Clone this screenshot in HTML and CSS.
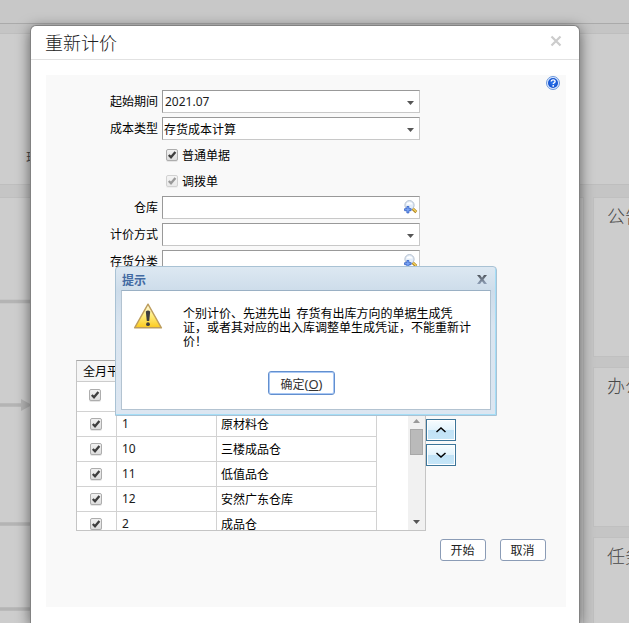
FILE: index.html
```html
<!DOCTYPE html>
<html lang="zh-CN">
<head>
<meta charset="utf-8">
<title>重新计价</title>
<link rel="stylesheet" href="styles.css">
</head>
<body>
<svg class="defs" width="0" height="0" aria-hidden="true">
  <defs>
    <linearGradient id="boxfill" x2="0" y2="1"><stop stop-color="#f2f2f2"/><stop offset="1" stop-color="#dcdcdc"/></linearGradient>
    <linearGradient id="warnfill" x2="0" y2="1"><stop stop-color="#fffbe8"/><stop offset=".5" stop-color="#ffec7a"/><stop offset="1" stop-color="#fbc91c"/></linearGradient>
    <radialGradient id="helpfill"><stop stop-color="#2f7df5"/><stop offset="1" stop-color="#1450cc"/></radialGradient>
    <linearGradient id="closefill" x2="0" y2="1"><stop stop-color="#525860"/><stop offset="1" stop-color="#8fa0b8"/></linearGradient>
    <symbol id="check" viewBox="0 0 12 13">
      <rect y="1" width="12" height="12" rx="2" fill="#e6e6e6"/>
      <rect x=".5" y=".5" width="11" height="11" rx="1.5" fill="url(#boxfill)" stroke="#adadad"/>
      <path d="M2.800 6 5 8.300 9.400 3" fill="none" stroke="#3e3e3e" stroke-width="2.300"/>
    </symbol>
    <symbol id="lookup" viewBox="0 0 14 14">
      <path d="m8.300 8.400 4 3.700" stroke="#a87c1c" stroke-width="2.800"/>
      <path d="m8.500 8.200 3.700 3.500" stroke="#f3d45e" stroke-width="1.500"/>
      <circle cx="5.500" cy="5.200" r="4.600" fill="#e3edf9" stroke="#b4bfce"/>
      <path d="M2.200 4.500a3.500 3.500 0 0 1 6.500 0Z" fill="#fff"/>
      <path d="M2.900 6.500h2v2.200h2.200v2H4.900v2.200h-2v-2.200H.6v-2h2.300Z" fill="#7ba5f5" stroke="#3a66c8" stroke-width=".9"/>
    </symbol>
  </defs>
</svg>

<div class="page">
  <div class="topbar"></div>
  <div class="banner"><span>现</span></div>
  <div class="workspace">
    <div class="flow">
      <svg width="584" height="425" viewBox="0 0 584 425">
        <g stroke="#b4b4b4" stroke-width="3.500"><path d="M0 103.500h60M0 207h24M0 326h60M0 411h60"/></g>
        <path d="M21 201 32 207 21 213Z" fill="#b4b4b4"/>
      </svg>
    </div>
    <div class="side">
      <section>公告</section>
      <section>办公</section>
      <section>任务</section>
    </div>
  </div>
</div>

<div class="modal">
  <header class="modal-head">
    <h1>重新计价</h1>
    <svg width="12" height="12" viewBox="0 0 12 12"><path d="m1.500 1.500 9 9m0-9-9 9" stroke="#ccc" stroke-width="2.200"/></svg>
  </header>
  <div class="modal-body">
    <svg class="help" width="14" height="14" viewBox="0 0 14 14">
      <circle cx="7" cy="7" r="6.500" fill="#dcebff" stroke="#6d98dc"/>
      <circle cx="7" cy="7" r="5" fill="url(#helpfill)"/>
      <path d="M5.200 5.600c0-2.300 3.900-2.300 3.900-.2 0 1.300-1.900 1.400-1.900 2.700M7.200 9.100v1.600" stroke="#fff" stroke-width="1.400" fill="none"/>
    </svg>
    <div class="form">
      <div class="row"><label>起始期间</label><div class="field"><span class="num">2021.07</span><i class="drop"></i></div></div>
      <div class="row"><label>成本类型</label><div class="field"><span>存货成本计算</span><i class="drop"></i></div></div>
      <div class="ticks">
        <div class="tick"><svg width="12" height="13"><use href="#check"/></svg><span>普通单据</span></div>
        <div class="tick off"><svg width="12" height="13"><use href="#check"/></svg><span>调拨单</span></div>
      </div>
      <div class="row"><label>仓库</label><div class="field"><svg width="14" height="14"><use href="#lookup"/></svg></div></div>
      <div class="row"><label>计价方式</label><div class="field"><i class="drop"></i></div></div>
      <div class="row"><label>存货分类</label><div class="field"><svg width="14" height="14"><use href="#lookup"/></svg></div></div>
      <div class="row"><label>存货</label><div class="field"><svg width="14" height="14"><use href="#lookup"/></svg></div></div>
    </div>
    <div class="lists">
      <div class="grid">
        <div class="grid-head">全月平均</div>
        <div class="grid-all"><svg width="12" height="13"><use href="#check"/></svg></div>
        <div class="grid-scroll">
          <div class="grid-rows">
            <div class="line"><b><svg width="12" height="13"><use href="#check"/></svg></b><span class="num">1</span><span>原材料仓</span></div>
            <div class="line"><b><svg width="12" height="13"><use href="#check"/></svg></b><span class="num">10</span><span>三楼成品仓</span></div>
            <div class="line"><b><svg width="12" height="13"><use href="#check"/></svg></b><span class="num">11</span><span>低值品仓</span></div>
            <div class="line"><b><svg width="12" height="13"><use href="#check"/></svg></b><span class="num">12</span><span>安然广东仓库</span></div>
            <div class="line"><b><svg width="12" height="13"><use href="#check"/></svg></b><span class="num">2</span><span>成品仓</span></div>
          </div>
          <div class="scrollbar"><i class="up"></i><i class="thumb"></i><i class="drop"></i></div>
        </div>
      </div>
      <div class="movers">
        <button><svg width="10" height="6" viewBox="0 0 10 6"><path d="m.5 5 4.500-4 4.500 4"/></svg></button>
        <button><svg width="10" height="6" viewBox="0 0 10 6"><path d="m.5 1 4.500 4 4.500-4"/></svg></button>
      </div>
    </div>
    <div class="actions"><button>开始</button><button>取消</button></div>
  </div>
</div>

<div class="alert">
  <div class="alert-head"><strong>提示</strong>
    <svg width="10" height="9" viewBox="0 0 10 9"><path d="M0 0h3L5 2.800 7 0h3L6.500 4.500 10 9H7L5 6.200 3 9H0l3.500-4.500Z" fill="url(#closefill)"/></svg>
  </div>
  <div class="alert-body">
    <div class="message">
      <svg width="30" height="26" viewBox="0 0 30 26">
        <path d="M15 1.200 28.400 24.800H1.600Z" fill="url(#warnfill)" stroke="#bd9d5c" stroke-width="1.400" stroke-linejoin="round"/>
        <path d="M12.800 8.500q2.200-2 4.400 0L16.200 18h-2.400Z" fill="#3d3d3d"/><circle cx="15" cy="21.200" r="1.900" fill="#3d3d3d"/>
      </svg>
      <p>个别计价、先进先出&nbsp; 存货有出库方向的单据生成凭<br>证，或者其对应的出入库调整单生成凭证，不能重新计<br>价！</p>
    </div>
    <button>确定<span>(<u>O</u>)</span></button>
  </div>
</div>
</body>
</html>
```
FILE: styles.css
```css
* { box-sizing: border-box; }
html, body { height: 100%; margin: 0; overflow: hidden; }
body {
  position: relative;
  background: #c5c5c5;
  color: #000;
  font: 12px/14px "Noto Sans CJK SC", sans-serif;
}
svg { display: block; flex: none; }
.defs { position: absolute; }
.num { font-family: "Noto Sans", sans-serif; color: #1c1c1c; }
button { padding: 0; font: inherit; }

.page { height: 623px; overflow: hidden; }
.topbar { height: 24px; background: #c8c8c8; border-bottom: 1px solid #aaa; }
.banner {
  height: 152px; margin-top: 9px; padding: 116px 0 0 26px;
  background: #cdcdcd; border: solid #bebebe; border-width: 1px 0; color: #444;
}
.workspace { display: flex; gap: 9px; margin-top: 12px; }
.flow { width: 584px; height: 426px; flex: none; background: #cdcdcd; border: solid #bfbfbf; border-width: 1px 1px 0 0; }
.side { display: flex; flex-direction: column; gap: 10px; flex: none; width: 60px; }
.side section {
  height: 160px; padding: 5px 0 0 13px; background: #cdcdcd; border: 1px solid #c0c0c0;
  color: #484848; font-size: 18px; line-height: 24px; font-weight: 300; white-space: nowrap;
}

.modal {
  position: absolute; left: 30px; top: 25px; width: 550px; height: 598px;
  background: #fff; border: 1px solid #828282; border-bottom: 0; border-radius: 6px 6px 0 0;
  box-shadow: 0 3px 14px rgba(0, 0, 0, .55);
}
.modal-head {
  display: flex; align-items: flex-start; justify-content: space-between;
  height: 34px; padding: 4px 17px 0 14px; border-bottom: 1px solid #e2e2e2;
}
.modal-head h1 { margin: 0; font-size: 18px; line-height: 24px; font-weight: 300; color: #222; }
.modal-head svg { margin-top: 5px; }
.modal-body { position: relative; width: 520px; height: 532px; margin: 15px 0 0 15px; padding-top: 15px; background: #f9f9f9; }
.help { position: absolute; right: 6px; top: 1px; }

.form { height: 270px; overflow: hidden; }
.row { display: flex; gap: 4px; height: 23px; margin-bottom: 4px; }
.row label { width: 112px; text-align: right; line-height: 22px; white-space: nowrap; }
.field {
  display: flex; align-items: center; width: 258px; height: 23px; padding: 0 3px 0 1px;
  background: #fff; border: 1px solid #c8c8c8; border-top-color: #999; border-left-color: #999;
}
.field .num { margin-left: 1px; }
.field .drop { margin: 3px 2px 0 auto; }
.field svg { margin-left: auto; margin-right: -2px; margin-top: -1px; }
.drop { width: 7px; height: 4px; background: #555; clip-path: polygon(0 0, 100% 0, 50% 100%); }
.ticks { height: 52px; }
.tick { display: flex; align-items: center; gap: 4px; height: 26px; margin-left: 120px; }
.tick:first-child { height: 22px; }
.tick:last-child { height: 30px; }
.tick.off svg { opacity: .5; }

.lists { display: flex; }
.grid { width: 350px; height: 171px; margin-left: 30px; background: #fff; border: 1px solid #c5c5c5; border-top-color: #a8a8a8; overflow: hidden; }
.grid-head { height: 21px; padding-left: 6px; line-height: 20px; background: #f5f5f5; border-bottom: 1px solid #ccc; }
.grid-all { height: 30px; padding: 7px 12px; border-bottom: 1px solid #d2d2d2; }
.grid-scroll { display: flex; justify-content: space-between; height: 118px; }
.grid-rows { width: 300px; }
.line { display: grid; grid-template-columns: 40px 100px 160px; height: 25px; line-height: 24px; border-bottom: 1px solid #d2d2d2; }
.line > * { padding-left: 5px; border-right: 1px solid #d2d2d2; }
.line > :last-child { padding-left: 4px; }
.line b { padding: 6px 0 0 13px; }
.scrollbar { display: flex; flex-direction: column; align-items: center; width: 17px; padding: 7px 0 6px; background: #f1f1f1; }
.scrollbar .up { width: 7px; height: 4px; background: #999; clip-path: polygon(50% 0, 100% 100%, 0 100%); }
.thumb { width: 13px; height: 26px; margin-top: 6px; background: #bababa; border: 1px solid #a8a8a8; }
.scrollbar .drop { margin-top: auto; }
.movers { display: flex; flex-direction: column; gap: 3px; padding-top: 59px; }
.movers button {
  display: grid; place-items: center; width: 30px; height: 22px; border: 1px solid #3c7599;
  background: linear-gradient(#f8fdff, #e2f3fc 50%, #c1e2f6 50%, #c6e6f8); box-shadow: inset 0 0 0 1px #fff;
}
.movers path { fill: none; stroke: #000; stroke-width: 1.5; }
.actions { display: flex; gap: 14px; margin: 8px 0 0 394px; }
.actions button {
  width: 46px; height: 22px; padding-right: 1px; background: #fff; border: 1px solid #8b9cb6; border-radius: 3px; color: #222; line-height: 20px;
}

.alert {
  position: absolute; left: 115px; top: 266px; width: 382px; height: 150px; padding: 0 5px;
  background: linear-gradient(#dde8f2, #cddcea 24px, #dae5f0 60px, #dce6f1);
  border: 1px solid #a9c2d4; border-radius: 4px 4px 0 0;
  box-shadow: inset -1px -1px #a5def7;
}
.alert-head { display: flex; justify-content: space-between; align-items: center; height: 23px; padding: 3px 4px 0 1px; color: #426aa2; }
.alert-head svg { margin-top: -2px; }
.alert-body { height: 120px; background: #fff; border: 1px solid #b3c3d1; border-top-color: #9ab0c4; }
.message { display: flex; gap: 20px; padding: 12px 0 0 11px; height: 80px; }
.message p { margin: 3px 0 0; white-space: nowrap; }
.alert-body button {
  display: block; width: 67px; height: 24px; margin-left: 146px; background: #fff;
  border: 1px solid #638fce; border-radius: 3px; box-shadow: inset 0 0 0 1px #a9c8f5; color: #333; line-height: 21px;
}
.alert-body button span { font: 13px/20px "Noto Sans", sans-serif; }
```
